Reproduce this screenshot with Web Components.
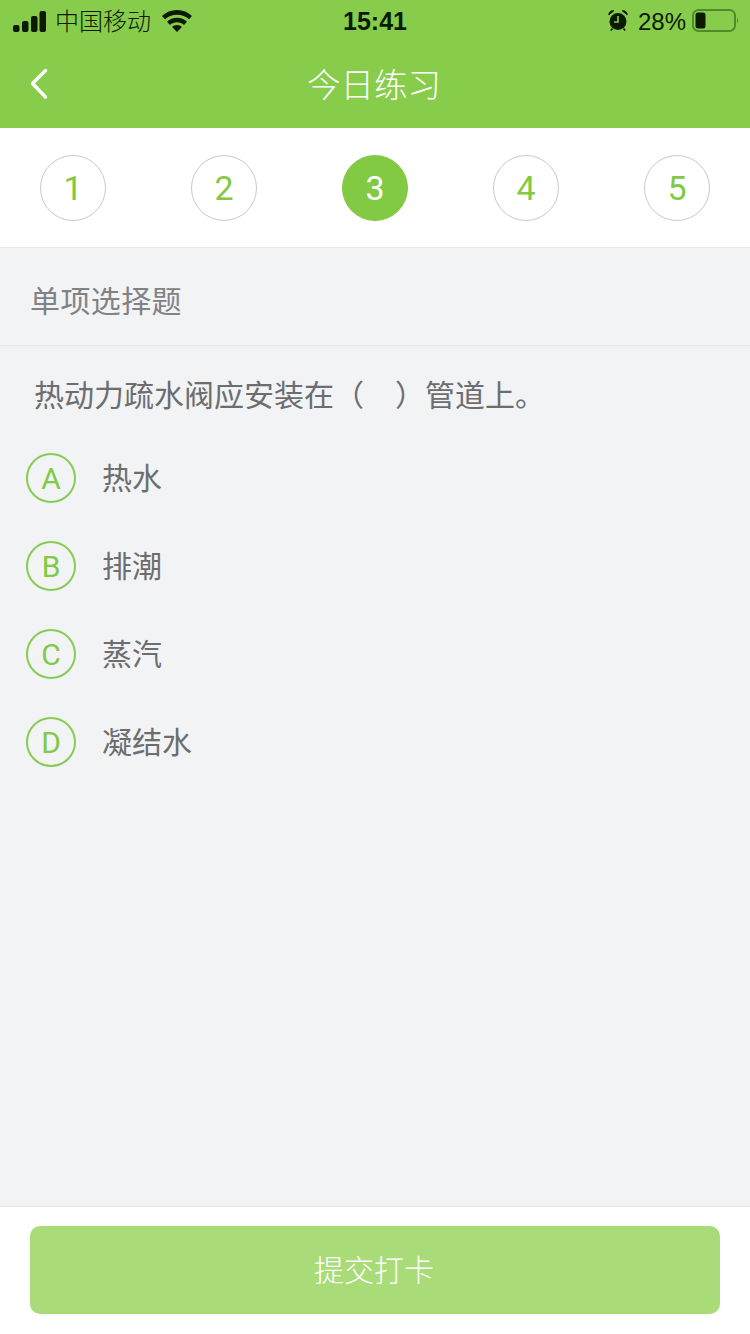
<!DOCTYPE html>
<html lang="zh">
<head>
<meta charset="utf-8">
<title>今日练习</title>
<style>
  html, body { margin: 0; height: 100%; }
  body {
    font-family: "Noto Sans CJK SC", sans-serif;
    background: #f2f3f5;
  }
  practice-page { height: 1334px; }
  .blank { display: inline-block; width: 31px; }
</style>
</head>
<body>
<practice-page>
  <status-bar slot="header"></status-bar>
  <nav-bar slot="header" title="今日练习"></nav-bar>
  <step-row slot="steps" current="3" count="5"></step-row>
  <section-title slot="body">单项选择题</section-title>
  <question-text slot="body">热动力疏水阀应安装在（<span class="blank"></span>）管道上。</question-text>
  <answer-option slot="body" letter="A">热水</answer-option>
  <answer-option slot="body" letter="B">排潮</answer-option>
  <answer-option slot="body" letter="C">蒸汽</answer-option>
  <answer-option slot="body" letter="D">凝结水</answer-option>
  <submit-bar slot="footer">提交打卡</submit-bar>
</practice-page>

<script>
class PracticePage extends HTMLElement {
  constructor() {
    super();
    this.attachShadow({ mode: 'open' });
    this.shadowRoot.innerHTML = /* html */ `
      <style>
        :host { display: flex; flex-direction: column; }
        header { background: #87cd4b; }
        main { flex: 1; min-height: 0; }
      </style>
      <header><slot name="header"></slot></header>
      <slot name="steps"></slot>
      <main><slot name="body"></slot></main>
      <slot name="footer"></slot>
    `;
  }
}

class StatusBar extends HTMLElement {
  constructor() {
    super();
    this.attachShadow({ mode: 'open' });
    this.shadowRoot.innerHTML = /* html */ `
      <style>
        :host {
          display: grid;
          grid-template-columns: 1fr auto 1fr;
          align-items: center;
          height: 40px;
          padding: 0 11px 0 13px;
          color: #0c1a04;
          font-size: 24px;
          line-height: 40px;
        }
        .left, .right { display: flex; align-items: center; }
        .right { justify-content: flex-end; }
        .carrier { margin-left: 9px; font-weight: 300; padding-bottom: 2px; }
        .wifi { margin-left: 11px; }
        .time {
          font-family: "Liberation Sans", sans-serif;
          font-size: 25px;
          font-weight: 700;
          padding-right: 2px;
        }
        .pct {
          font-family: "Liberation Sans", sans-serif;
          margin-left: 10px;
          padding-top: 2px;
        }
        .alarm { margin-bottom: 2px; }
        .battery { margin: 0 0 2px 6px; }
        svg { display: block; }
      </style>
      <div class="left">
        <svg width="33" height="21" viewBox="0 0 33 21" fill="#0c1a04">
          <rect x="0" y="14" width="6.500" height="7" rx="2"/>
          <rect x="9" y="10" width="6.500" height="11" rx="2"/>
          <rect x="18" y="5" width="6.500" height="16" rx="2"/>
          <rect x="26.500" y="0" width="6.500" height="21" rx="2"/>
        </svg>
        <span class="carrier">中国移动</span>
        <svg class="wifi" width="30" height="22" viewBox="0 0 30 22" fill="#0c1a04">
          <path d="M15 0C9 0 4 2.300 0 6l3 3.300C6.200 6.300 10.400 4.800 15 4.800S23.800 6.300 27 9.300L30 6C26 2.300 21 0 15 0z"/>
          <path d="M15 7.800c-3.900 0-7.400 1.500-10 4l3 3.200c1.900-1.700 4.300-2.700 7-2.700s5.100 1 7 2.700l3-3.200c-2.600-2.500-6.100-4-10-4z"/>
          <path d="M15 15c-1.900 0-3.600.7-4.900 1.900L15 22l4.900-5.100C18.600 15.700 16.900 15 15 15z"/>
        </svg>
      </div>
      <div class="time">15:41</div>
      <div class="right">
        <svg class="alarm" width="20" height="21" viewBox="0 0 20 21">
          <circle cx="10" cy="11.500" r="8.500" fill="#0c1a04"/>
          <path d="M.8 4.800C.8 2 3.200.2 5.800.8zM19.200 4.800C19.200 2 16.800.2 14.200.8z" fill="#0c1a04" stroke="#0c1a04" stroke-width="1"/>
          <path d="M4.500 18.500 2.800 20.500M15.500 18.500 17.200 20.500" stroke="#0c1a04" stroke-width="1.600"/>
          <path d="M10 6V12H6" stroke="#87cd4b" stroke-width="1.600" fill="none"/>
        </svg>
        <span class="pct">28%</span>
        <svg class="battery" width="47" height="23" viewBox="0 0 47 23">
          <rect x="1" y="1" width="42" height="21" rx="5.500" fill="none" stroke="#4f8a2c" stroke-width="2"/>
          <rect x="3.500" y="3.500" width="10" height="16" rx="2.500" fill="#0c1a04"/>
          <path d="M45 8.500c1.300.8 1.300 5.200 0 6z" fill="#4f8a2c"/>
        </svg>
      </div>
    `;
  }
}

class NavBar extends HTMLElement {
  constructor() {
    super();
    this.attachShadow({ mode: 'open' });
    this.shadowRoot.innerHTML = /* html */ `
      <style>
        :host {
          display: grid;
          grid-template-columns: 1fr auto 1fr;
          align-items: center;
          height: 88px;
          color: #fff;
          font-size: 33.500px;
          font-weight: 300;
        }
        svg { display: block; margin: 0 0 0 30px; }
        .title { padding: 0 2px 4px 0; }
      </style>
      <svg width="18" height="32" viewBox="0 0 18 32" fill="none">
        <path d="M15.500 2.500 2.500 15.500l13 13.500" stroke="#fff" stroke-width="3.400" stroke-linecap="round" stroke-linejoin="round"/>
      </svg>
      <div class="title">${this.getAttribute('title') ?? ''}</div>
    `;
  }
}

class StepRow extends HTMLElement {
  constructor() {
    super();
    this.attachShadow({ mode: 'open' });
    const count = Number(this.getAttribute('count'));
    const current = Number(this.getAttribute('current'));
    let items = '';
    for (let i = 1; i <= count; i++) {
      items += `<div class="step ${i === current ? 'on' : ''}">${i}</div>`;
    }
    this.shadowRoot.innerHTML = /* html */ `
      <style>
        :host {
          display: flex;
          justify-content: space-between;
          align-items: center;
          box-sizing: border-box;
          height: 120px;
          padding: 0 40px;
          background: #fff;
          border-bottom: 1px solid #e6e7e9;
        }
        .step {
          box-sizing: border-box;
          width: 66px;
          height: 66px;
          border: 1px solid #c9c9c9;
          border-radius: 50%;
          display: flex;
          align-items: center;
          justify-content: center;
          color: #82c944;
          font: 400 34px Roboto, sans-serif;
        }
        .on {
          background: #82c944;
          border-color: #82c944;
          color: #fff;
        }
      </style>
      ${items}
    `;
  }
}

class SectionTitle extends HTMLElement {
  constructor() {
    super();
    this.attachShadow({ mode: 'open' });
    this.shadowRoot.innerHTML = /* html */ `
      <style>
        :host {
          display: flex;
          align-items: center;
          box-sizing: border-box;
          height: 98px;
          padding: 4px 0 0 30px;
          border-bottom: 1px solid #e6e7e9;
          color: #808284;
          font-size: 30px;
          letter-spacing: 0.400px;
          font-weight: 400;
        }
      </style>
      <slot></slot>
    `;
  }
}

class QuestionText extends HTMLElement {
  constructor() {
    super();
    this.attachShadow({ mode: 'open' });
    this.shadowRoot.innerHTML = /* html */ `
      <style>
        :host {
          display: block;
          padding: 25px 0 0 34px;
          height: 107px;
          box-sizing: border-box;
          color: #6c6d6f;
          font-size: 30px;
          line-height: 44px;
          font-weight: 400;
          white-space: nowrap;
        }
      </style>
      <slot></slot>
    `;
  }
}

class AnswerOption extends HTMLElement {
  constructor() {
    super();
    this.attachShadow({ mode: 'open' });
    this.shadowRoot.innerHTML = /* html */ `
      <style>
        :host {
          display: flex;
          align-items: center;
          gap: 26px;
          height: 50px;
          margin: 0 0 38px 26px;
          color: #6c6d6f;
          font-size: 30px;
          font-weight: 400;
        }
        .letter {
          box-sizing: border-box;
          width: 50px;
          height: 50px;
          border: 2px solid #87cb52;
          border-radius: 50%;
          display: flex;
          align-items: center;
          justify-content: center;
          color: #82c944;
          font: 400 30px Roboto, sans-serif;
        }
        .label { padding-bottom: 5px; }
      </style>
      <div class="letter">${this.getAttribute('letter')}</div>
      <div class="label"><slot></slot></div>
    `;
  }
}

class SubmitBar extends HTMLElement {
  constructor() {
    super();
    this.attachShadow({ mode: 'open' });
    this.shadowRoot.innerHTML = /* html */ `
      <style>
        :host {
          display: block;
          box-sizing: border-box;
          height: 128px;
          padding: 19px 30px 0;
          background: #fff;
          border-top: 1px solid #e6e7e9;
        }
        .btn {
          box-sizing: border-box;
          height: 88px;
          padding: 0 2px 4px 0;
          border-radius: 10px;
          background: #a9dc78;
          color: #fff;
          font-size: 30px;
          font-weight: 300;
          display: flex;
          align-items: center;
          justify-content: center;
        }
      </style>
      <div class="btn"><slot></slot></div>
    `;
  }
}

customElements.define('practice-page', PracticePage);
customElements.define('status-bar', StatusBar);
customElements.define('nav-bar', NavBar);
customElements.define('step-row', StepRow);
customElements.define('section-title', SectionTitle);
customElements.define('question-text', QuestionText);
customElements.define('answer-option', AnswerOption);
customElements.define('submit-bar', SubmitBar);
</script>
</body>
</html>
